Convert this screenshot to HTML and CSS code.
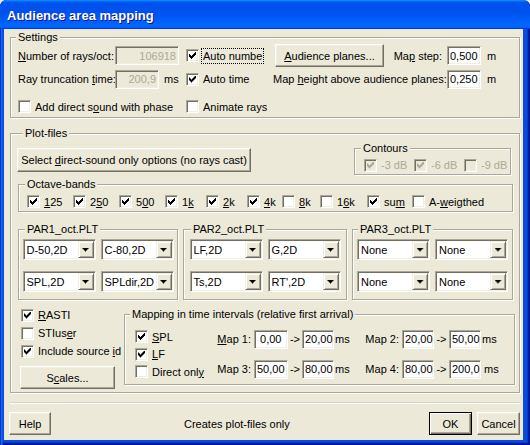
FILE: index.html
```html
<!DOCTYPE html>
<html>
<head>
<meta charset="utf-8">
<title>Audience area mapping</title>
<link rel="stylesheet" href="styles.css">
</head>
<body>
<div class="window">
  <div class="titlebar"><span class="title">Audience area mapping</span></div>
  <div class="client">
    <fieldset class="group settings">
      <legend>Settings</legend>
      <div class="settings-grid">
        <span class="lbl"><u>N</u>umber of rays/oct:</span>
        <span class="edit dis w64">106918</span>
        <label class="chk"><span class="cb on"></span><span class="focus">Auto numbe</span></label>
        <div class="split"><button class="btn planes"><span><u>A</u>udience planes...</span></button><span class="lbl">Ma<u>p</u> step:</span></div>
        <span class="edit w34">0,500</span>
        <span class="unit">m</span>

        <span class="lbl">Ray truncation <u>t</u>ime:</span>
        <span class="cell"><span class="edit dis w44">200,9</span><span class="unit">ms</span></span>
        <label class="chk"><span class="cb on"></span><span>Auto time</span></label>
        <span class="lbl right">Map <u>h</u>eight above audience planes:</span>
        <span class="edit w34">0,250</span>
        <span class="unit">m</span>

        <label class="chk span2 low"><span class="cb"></span><span>Add direct s<u>o</u>und with phase</span></label>
        <label class="chk low"><span class="cb"></span><span>Animate rays</span></label>
      </div>
    </fieldset>

    <fieldset class="group plot">
      <legend>Plot-files</legend>
      <div class="rowA">
        <button class="btn direct"><span>Select <u>d</u>irect-sound only options (no rays cast)</span></button>
        <fieldset class="group contours">
          <legend>Contours</legend>
          <div class="contours-row">
            <label class="chk dis"><span class="cb on"></span><span>-3 dB</span></label>
            <label class="chk dis"><span class="cb on"></span><span>-6 dB</span></label>
            <label class="chk dis"><span class="cb"></span><span>-9 dB</span></label>
          </div>
        </fieldset>
      </div>

      <fieldset class="group octave">
        <legend>Octave-bands</legend>
        <div class="octave-row">
          <label class="chk"><span class="cb on"></span><span><u>1</u>25</span></label>
          <label class="chk"><span class="cb on"></span><span>2<u>5</u>0</span></label>
          <label class="chk"><span class="cb on"></span><span>5<u>0</u>0</span></label>
          <label class="chk"><span class="cb on"></span><span>1<u>k</u></span></label>
          <label class="chk"><span class="cb on"></span><span><u>2</u>k</span></label>
          <label class="chk"><span class="cb on"></span><span><u>4</u>k</span></label>
          <label class="chk"><span class="cb"></span><span><u>8</u>k</span></label>
          <label class="chk"><span class="cb"></span><span>1<u>6</u>k</span></label>
          <label class="chk"><span class="cb on"></span><span>su<u>m</u></span></label>
          <label class="chk"><span class="cb"></span><span>A-<u>w</u>eigthed</span></label>
        </div>
      </fieldset>

      <div class="par-row">
        <fieldset class="group par p1">
          <legend>PAR1_oct.PLT</legend>
          <div class="combos">
            <div class="combo"><span class="ctext">D-50,2D</span><span class="drop"></span></div>
            <div class="combo"><span class="ctext">C-80,2D</span><span class="drop"></span></div>
            <div class="combo"><span class="ctext">SPL,2D</span><span class="drop"></span></div>
            <div class="combo"><span class="ctext">SPLdir,2D</span><span class="drop"></span></div>
          </div>
        </fieldset>
        <fieldset class="group par p2">
          <legend>PAR2_oct.PLT</legend>
          <div class="combos">
            <div class="combo"><span class="ctext">LF,2D</span><span class="drop"></span></div>
            <div class="combo"><span class="ctext">G,2D</span><span class="drop"></span></div>
            <div class="combo"><span class="ctext">Ts,2D</span><span class="drop"></span></div>
            <div class="combo"><span class="ctext">RT',2D</span><span class="drop"></span></div>
          </div>
        </fieldset>
        <fieldset class="group par p3">
          <legend>PAR3_oct.PLT</legend>
          <div class="combos">
            <div class="combo"><span class="ctext">None</span><span class="drop"></span></div>
            <div class="combo"><span class="ctext">None</span><span class="drop"></span></div>
            <div class="combo"><span class="ctext">None</span><span class="drop"></span></div>
            <div class="combo"><span class="ctext">None</span><span class="drop"></span></div>
          </div>
        </fieldset>
      </div>

      <div class="bottom">
        <div class="leftcol">
          <label class="chk row18"><span class="cb on"></span><span><u>R</u>ASTI</span></label>
          <label class="chk row18"><span class="cb"></span><span>STIus<u>e</u>r</span></label>
          <label class="chk row18"><span class="cb on"></span><span>Include source <u>i</u>d</span></label>
          <button class="btn scales"><span>S<u>c</u>ales...</span></button>
        </div>
        <fieldset class="group mapping">
          <legend>Mapping in time intervals (relative first arrival)</legend>
          <div class="mapping-body">
            <div class="cbcol">
              <label class="chk r17"><span class="cb on"></span><span><u>S</u>PL</span></label>
              <label class="chk r18"><span class="cb on"></span><span><u>L</u>F</span></label>
              <label class="chk r17"><span class="cb"></span><span>Direct onl<u>y</u></span></label>
            </div>
            <div class="mapgrid">
              <span class="mlbl"><u>M</u>ap 1:</span>
              <span class="edit">&nbsp;0,00</span>
              <span class="arrow">-&gt;</span>
              <span class="edit">20,00</span>
              <span class="ms">ms</span>
              <span class="mlbl">Map 2:</span>
              <span class="edit">20,00</span>
              <span class="arrow">-&gt;</span>
              <span class="edit">50,00</span>
              <span class="ms">ms</span>

              <span class="mlbl">Map 3:</span>
              <span class="edit">50,00</span>
              <span class="arrow">-&gt;</span>
              <span class="edit">80,00</span>
              <span class="ms">ms</span>
              <span class="mlbl">Map 4:</span>
              <span class="edit">80,00</span>
              <span class="arrow">-&gt;</span>
              <span class="edit">200,0</span>
              <span class="ms">ms</span>
            </div>
          </div>
        </fieldset>
      </div>
    </fieldset>

    <div class="sep"></div>

    <div class="buttonbar">
      <button class="btn help"><span>Help</span></button>
      <span class="status">Creates plot-files only</span>
      <button class="btn def ok"><span>OK</span></button>
      <button class="btn cancel"><span>Cancel</span></button>
    </div>
  </div>
</div>
</body>
</html>
```

FILE: styles.css
```css
* { box-sizing: border-box; }
html, body { margin: 0; padding: 0; }
body {
  width: 530px;
  height: 445px;
  overflow: hidden;
  background: #ECE9D8;
  font-family: "Liberation Sans", Arial, sans-serif;
  font-size: 11px;
  color: #000;
}
u { text-decoration: underline; text-underline-offset: 1px; }

/* window frame */
.window {
  width: 530px;
  height: 445px;
  display: flex;
  flex-direction: column;
  background: #0A4BD9;
  border-radius: 7px 7px 0 0;
  overflow: hidden;
  box-shadow: inset 1px 0 #0831D9, inset 2px 0 #166AEE, inset 3px 0 #0855DD,
              inset -1px -1px #00138C, inset -2px -2px #001EA0, inset -3px -3px #003BDA;
}
.titlebar {
  flex: none;
  height: 29px;
  display: flex;
  align-items: center;
  padding: 2px 0 0 7px;
  background: linear-gradient(180deg, #0997FF, #0053EE 8%, #0050EE 40%, #0066FF 88%, #0066FF 93%, #005BFF 95%, #003DD7 96%, #003DD7);
}
.title {
  color: #fff;
  font-weight: bold;
  font-size: 13px;
  text-shadow: 1px 1px #0F1089;
}
.client {
  flex: 1;
  margin: 0 7px 5px 4px;
  background: #ECE9D8;
  padding: 2px 3px 0 6px;
  display: flex;
  flex-direction: column;
}

/* group boxes */
fieldset.group {
  margin: 0;
  padding: 0;
  min-width: 0;
  border: 1px solid #ACA899;
  box-shadow: inset 1px 1px #fff, 1px 1px #fff;
}
fieldset.group > legend {
  margin-left: 5px;
  padding: 0 2px;
  height: 13px;
  line-height: 13px;
  background: #ECE9D8;
  white-space: nowrap;
}

/* generic controls */
.lbl { white-space: nowrap; }
.unit { padding-left: 5px; }
.edit {
  display: inline-flex;
  align-items: center;
  height: 19px;
  background: #fff;
  border: 1px solid;
  border-color: #ACA899 #fff #fff #ACA899;
  box-shadow: inset 1px 1px #716F64, inset -1px -1px #F1EFE2;
  padding: 0 2px;
  white-space: pre;
  overflow: hidden;
}
.edit.dis {
  background: #ECE9D8;
  color: #ACA899;
  justify-content: flex-end;
}
.w64 { width: 64px; }
.w44 { width: 44px; }
.w34 { width: 34px; }

.chk {
  display: flex;
  align-items: center;
  gap: 4px;
  white-space: nowrap;
}
.cb {
  position: relative;
  flex: none;
  width: 13px;
  height: 13px;
  background: #fff;
  border: 1px solid;
  border-color: #ACA899 #fff #fff #ACA899;
  box-shadow: inset 1px 1px #716F64, inset -1px -1px #F1EFE2;
}
.cb.on::after {
  content: "";
  position: absolute;
  left: 2px;
  top: 2px;
  width: 7px;
  height: 7px;
  background: #000;
  clip-path: polygon(0px 2px, 1px 2px, 1px 3px, 2px 3px, 2px 4px, 3px 4px, 3px 3px, 4px 3px, 4px 2px, 5px 2px, 5px 1px, 6px 1px, 6px 0px, 7px 0px,
                     7px 3px, 6px 3px, 6px 4px, 5px 4px, 5px 5px, 4px 5px, 4px 6px, 3px 6px, 3px 7px, 2px 7px, 2px 6px, 1px 6px, 1px 5px, 0px 5px);
}
.chk.dis { color: #ACA899; }
.chk.dis .cb { background: #ECE9D8; }
.chk.dis .cb.on::after { background: #ACA899; }
.focus { outline: 1px dotted #000; outline-offset: 1px; }

.btn {
  font: inherit;
  color: #000;
  background: #ECE9D8;
  border: 1px solid;
  border-color: #fff #716F64 #716F64 #fff;
  box-shadow: inset -1px -1px #ACA899, inset 1px 1px #F1EFE2;
  height: 23px;
  padding: 0;
  margin: 0;
  display: flex;
  align-items: center;
  justify-content: center;
  white-space: nowrap;
}
.btn.def {
  border-color: #000;
  box-shadow: inset 1px 1px #fff, inset -1px -1px #716F64, inset -2px -2px #ACA899;
}

.combo {
  display: flex;
  width: 73px;
  height: 21px;
  padding: 1px;
  background: #fff;
  border: 1px solid;
  border-color: #ACA899 #fff #fff #ACA899;
  box-shadow: inset 1px 1px #716F64, inset -1px -1px #F1EFE2;
}
.ctext {
  flex: 1;
  min-width: 0;
  padding-left: 2px;
  display: flex;
  align-items: center;
  white-space: nowrap;
  overflow: hidden;
}
.drop {
  flex: none;
  width: 16px;
  height: 17px;
  background: #ECE9D8;
  border: 1px solid;
  border-color: #F1EFE2 #716F64 #716F64 #F1EFE2;
  box-shadow: inset 1px 1px #fff, inset -1px -1px #ACA899;
  display: flex;
  align-items: center;
  justify-content: center;
}
.drop::after {
  content: "";
  width: 7px;
  height: 4px;
  background: #000;
  clip-path: polygon(0px 0px, 7px 0px, 7px 1px, 6px 1px, 6px 2px, 5px 2px, 5px 3px, 4px 3px, 4px 4px, 3px 4px, 3px 3px, 2px 3px, 2px 2px, 1px 2px, 1px 1px, 0px 1px);
}

/* settings */
.settings-grid {
  display: grid;
  grid-template-columns: 97px 71px 87px 174px 35px auto;
  grid-template-rows: 23px 24px 24px;
  align-items: center;
  padding: 0 0 2px 7px;
}
.split {
  display: flex;
  align-items: center;
  justify-content: space-between;
  padding: 0 5px 0 2px;
}
.planes { width: 109px; }
.right { text-align: right; padding-right: 5px; }
.cell { display: flex; align-items: center; }
.span2 { grid-column: span 2; }
.low { align-self: end; margin-bottom: 2px; }

/* plot files */
.plot {
  margin-top: 9px !important;
  padding: 0 6px 3px 7px !important;
}
.rowA {
  display: flex;
  justify-content: space-between;
  align-items: flex-start;
}
.direct { width: 234px; height: 24px; margin-top: 8px; margin-left: -1px; }
.contours { width: 157px; margin: 2px 2px 0 0 !important; }
.contours > legend { margin-left: 6px !important; }
.contours-row {
  display: grid;
  grid-template-columns: 50px 50px auto;
  padding: 3px 0 2px 9px;
  height: 19px;
}

.octave { margin-top: 3px !important; }
.octave > legend { margin-left: 6px !important; }
.octave-row {
  display: grid;
  grid-template-columns: 46px 46px 46px 41px 41px 35px 38px 47px 45px auto;
  height: 13px;
  box-sizing: content-box;
  padding: 4px 0 3px 8px;
}

.par-row {
  display: grid;
  grid-template-columns: 160px 164px 161px;
  column-gap: 5px;
  margin-top: 11px;
}
.p1 > legend { margin-left: 6px !important; }
.p2 > legend { margin-left: 7px !important; }
.combos {
  display: grid;
  grid-template-columns: 73px 73px;
  column-gap: 5px;
  row-gap: 11px;
  justify-content: center;
  padding: 3px 0 7px;
}

.bottom {
  display: flex;
  align-items: flex-start;
  margin-top: 6px;
}
.leftcol {
  width: 106px;
  flex: none;
  display: flex;
  flex-direction: column;
}
.row18 { height: 18px; padding-left: 3px; }
.scales { width: 95px; margin: 6px 0 0 2px; }

.mapping { flex: 1; margin: 2px -2px 0 0 !important; }
.mapping-body {
  display: flex;
  align-items: flex-start;
  padding: 0 0 4px 10px;
}
.cbcol {
  width: 80px;
  flex: none;
  margin-top: 7px;
  display: flex;
  flex-direction: column;
}
.r17 { height: 17px; }
.r18 { height: 18px; }
.mapgrid {
  display: grid;
  grid-template-columns: 39px 34px 14px 32px 18px 50px 32px 15px 32px auto;
  grid-template-rows: 20px 20px;
  row-gap: 10px;
  align-items: center;
  margin-top: 8px;
}
.mlbl { text-align: right; padding-right: 3px; white-space: nowrap; }
.mapgrid .edit { width: 100%; }
.arrow { text-align: center; }
.ms { padding-left: 1px; }
.mapgrid .ms:last-child { padding-left: 3px; }

/* bottom bar */
.sep {
  margin-top: 9px;
  height: 2px;
  border-top: 1px solid #D6D2C2;
  border-bottom: 1px solid #fff;
}
.buttonbar {
  display: flex;
  align-items: center;
  margin-top: 8px;
}
.help { width: 42px; margin-left: -1px; }
.status { margin-left: 133px; }
.ok { width: 43px; margin-left: auto; }
.cancel { width: 43px; margin-left: 5px; }
```
